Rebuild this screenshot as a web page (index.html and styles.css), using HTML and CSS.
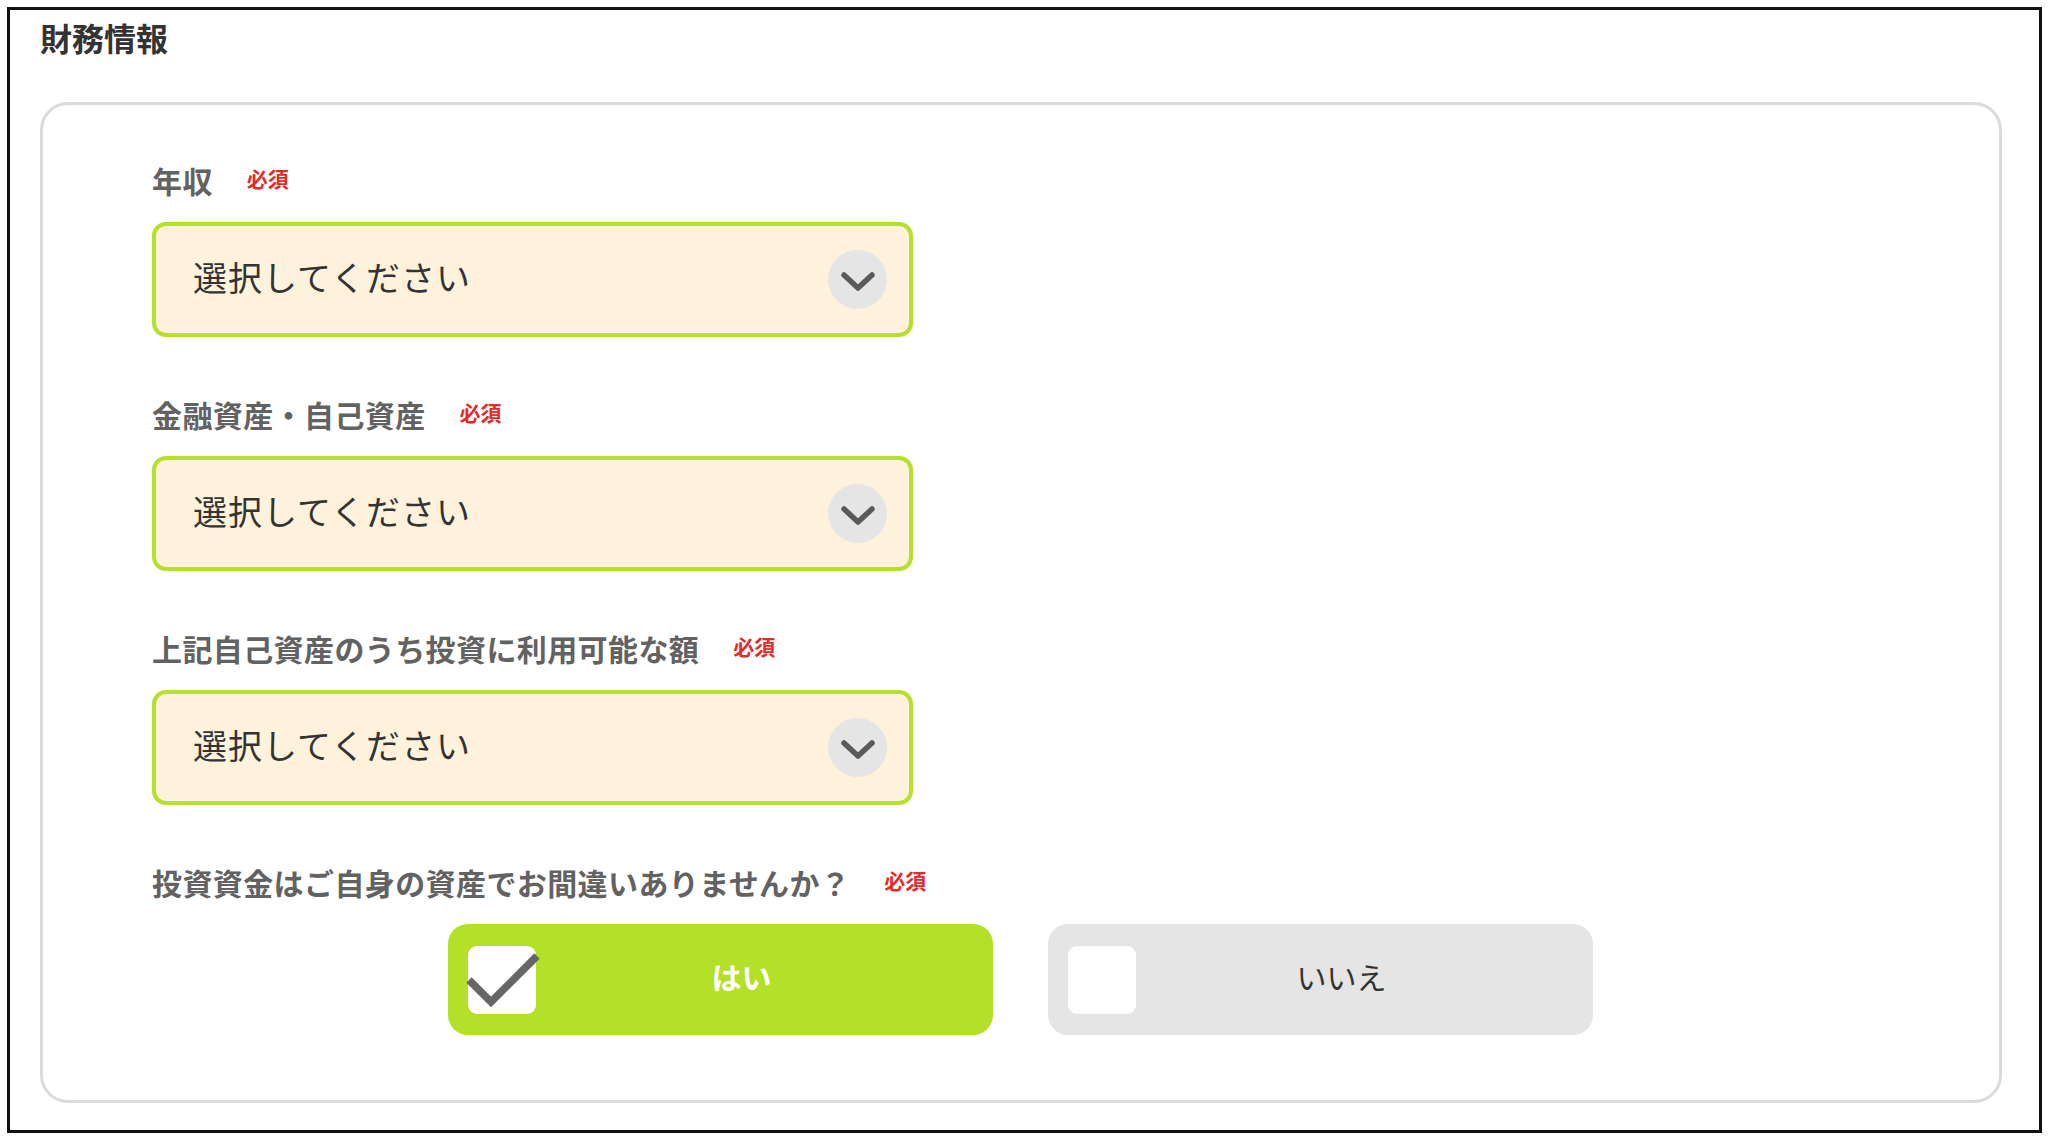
FILE: index.html
```html
<!DOCTYPE html>
<html lang="ja">
<head>
<meta charset="utf-8">
<title>財務情報</title>
<link rel="stylesheet" href="styles.css">
</head>
<body>
<div class="frame">
  <h2 class="title">財務情報</h2>
  <div class="card">
    <div class="field">
      <div class="label-row"><span class="label">年収</span><span class="req">必須</span></div>
      <div class="select"><span class="select-text">選択してください</span><span class="chev"><svg width="36" height="22" viewBox="0 0 36 22"><path d="M4 4 L18 17 L32 4" fill="none" stroke="#5a5a5a" stroke-width="5.5" stroke-linecap="round" stroke-linejoin="round"/></svg></span></div>
    </div>
    <div class="field">
      <div class="label-row"><span class="label">金融資産・自己資産</span><span class="req">必須</span></div>
      <div class="select"><span class="select-text">選択してください</span><span class="chev"><svg width="36" height="22" viewBox="0 0 36 22"><path d="M4 4 L18 17 L32 4" fill="none" stroke="#5a5a5a" stroke-width="5.5" stroke-linecap="round" stroke-linejoin="round"/></svg></span></div>
    </div>
    <div class="field">
      <div class="label-row"><span class="label">上記自己資産のうち投資に利用可能な額</span><span class="req">必須</span></div>
      <div class="select"><span class="select-text">選択してください</span><span class="chev"><svg width="36" height="22" viewBox="0 0 36 22"><path d="M4 4 L18 17 L32 4" fill="none" stroke="#5a5a5a" stroke-width="5.5" stroke-linecap="round" stroke-linejoin="round"/></svg></span></div>
    </div>
    <div class="field last">
      <div class="label-row"><span class="label">投資資金はご自身の資産でお間違いありませんか？</span><span class="req">必須</span></div>
      <div class="choices">
        <div class="choice yes">
          <span class="box"><svg class="check" width="80" height="60" viewBox="0 0 80 60"><path d="M4 28 L26 50 L72 4" fill="none" stroke="#666" stroke-width="7.5"/></svg></span>
          <span class="choice-text">はい</span>
        </div>
        <div class="choice no">
          <span class="box"></span>
          <span class="choice-text">いいえ</span>
        </div>
      </div>
    </div>
  </div>
</div>
</body>
</html>
```

FILE: styles.css
```css
* { box-sizing: border-box; }
html, body { margin: 0; padding: 0; background: #fff; }
body {
  font-family: "Noto Sans CJK JP", "Noto Sans", sans-serif;
  color: #333;
}
.frame {
  margin: 7px;
  width: 2035px;
  height: 1126px;
  border: 3px solid #111;
  padding: 3px 37px 0 30px;
}
.title {
  margin: 0;
  font-size: 32px;
  line-height: 48px;
  font-weight: 700;
  color: #333;
}
.card {
  margin-top: 41px;
  border: 3px solid #dadada;
  border-radius: 28px;
  padding: 55px 0 65px 109px;
}
.field { margin-bottom: 57px; }
.field.last { margin-bottom: 0; }
.label-row {
  display: flex;
  align-items: flex-start;
  margin-bottom: 22px;
}
.label {
  font-size: 30px;
  line-height: 40px;
  font-weight: 700;
  color: #626262;
  letter-spacing: 0.4px;
}
.req {
  margin-left: 34px;
  font-size: 21px;
  line-height: 36px;
  font-weight: 700;
  color: #e52a2a;
}
.select {
  width: 761px;
  height: 115px;
  border: 4px solid #b5e02b;
  border-radius: 14px;
  background: #fef2dc;
  display: flex;
  align-items: center;
  justify-content: space-between;
  padding: 0 22px 0 37px;
}
.select-text {
  font-size: 34px;
  line-height: 44px;
  padding-bottom: 5px;
  color: #333;
  font-weight: 400;
  letter-spacing: 1px;
}
.chev {
  width: 59px;
  height: 59px;
  border-radius: 50%;
  background: #e5e5e5;
  display: flex;
  align-items: center;
  justify-content: center;
  padding-top: 4px;
}
.chev svg { display: block; }
.choices {
  display: flex;
  gap: 55px;
  margin-left: 296px;
}
.choice {
  width: 545px;
  height: 111px;
  border-radius: 20px;
  display: grid;
  grid-template-areas: "a";
  align-items: center;
}
.choice > * { grid-area: a; }
.yes { background: #b4e02a; }
.no { background: #e5e5e5; }
.box {
  justify-self: start;
  margin-left: 20px;
  width: 68px;
  height: 68px;
  border-radius: 9px;
  background: #fff;
  position: relative;
}
.check {
  position: absolute;
  left: -3px;
  top: 6px;
  overflow: visible;
}
.choice-text {
  justify-self: center;
  padding-left: 42px;
  padding-bottom: 7px;
  font-size: 30px;
  line-height: 40px;
}
.yes .choice-text { color: #fff; font-weight: 700; }
.no .choice-text { color: #333; font-weight: 400; }
```
